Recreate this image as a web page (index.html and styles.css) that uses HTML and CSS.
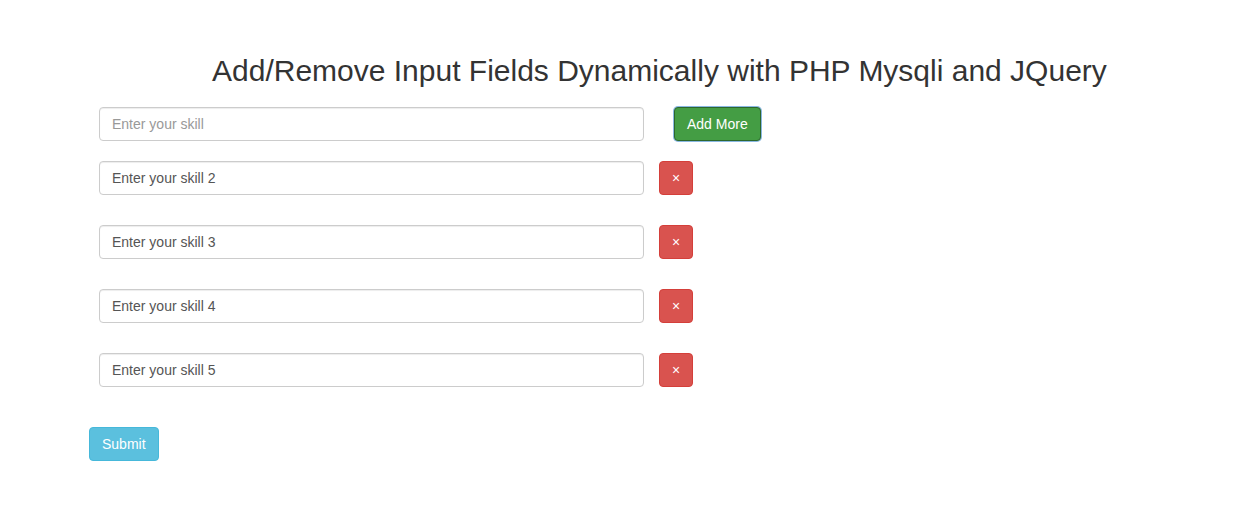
FILE: index.html
```html
<!DOCTYPE html>
<html lang="en">
<head>
    <meta charset="UTF-8">
    <title>Add/Remove Input Fields Dynamically</title>
    <link rel="stylesheet" href="styles.css">
</head>
<body>
<div class="container">
    <h2 class="title">Add/Remove Input Fields Dynamically with PHP Mysqli and JQuery</h2>
    <form class="skills-form" onsubmit="return false">
        <div id="dynamic_field" class="field-list">
            <div class="field-row">
                <input type="text" name="skill[]" placeholder="Enter your skill" class="form-control">
                <button type="button" class="btn btn-success btn-add">Add More</button>
            </div>
            <div class="field-row">
                <input type="text" name="skill[]" value="Enter your skill 2" class="form-control">
                <button type="button" class="btn btn-danger">&times;</button>
            </div>
            <div class="field-row">
                <input type="text" name="skill[]" value="Enter your skill 3" class="form-control">
                <button type="button" class="btn btn-danger">&times;</button>
            </div>
            <div class="field-row">
                <input type="text" name="skill[]" value="Enter your skill 4" class="form-control">
                <button type="button" class="btn btn-danger">&times;</button>
            </div>
            <div class="field-row">
                <input type="text" name="skill[]" value="Enter your skill 5" class="form-control">
                <button type="button" class="btn btn-danger">&times;</button>
            </div>
        </div>
        <button type="submit" class="btn btn-info">Submit</button>
    </form>
</div>
</body>
</html>
```

FILE: styles.css
```css
* {
    box-sizing: border-box;
}

body {
    margin: 0;
    font-family: "Liberation Sans", Arial, sans-serif;
    font-size: 14px;
    line-height: 1.42857;
    color: #333;
    background: #fff;
}

.container {
    padding: 0 0 0 89px;
}

.title {
    margin: 0;
    padding: 51px 0 0 123px;
    font-size: 30px;
    font-weight: normal;
    line-height: 40px;
    color: #333;
}

.skills-form {
    margin-top: 16px;
}

.field-list {
    display: flex;
    flex-direction: column;
    gap: 30px;
    padding-left: 10px;
}

.field-list .field-row:first-child {
    margin-bottom: -10px;
}

.field-row {
    display: flex;
    align-items: center;
    gap: 15px;
}

.form-control {
    width: 545px;
    height: 34px;
    padding: 6px 12px;
    font-family: inherit;
    font-size: 14px;
    color: #555;
    background: #fff;
    border: 1px solid #ccc;
    border-radius: 4px;
    box-shadow: inset 0 1px 1px rgba(0, 0, 0, 0.075);
}

.form-control::placeholder {
    color: #999;
}

.btn {
    height: 34px;
    padding: 6px 12px;
    font-family: inherit;
    font-size: 14px;
    line-height: 20px;
    color: #fff;
    border: 1px solid transparent;
    border-radius: 4px;
    cursor: pointer;
}

.btn-success {
    background-color: #449d44;
    border-color: #2d672d;
    box-shadow: 0 0 0 1px #8ab8e2;
}

.btn-add {
    margin-left: 15px;
}

.btn-danger {
    width: 34px;
    padding: 6px 0;
    background-color: #d9534f;
    border-color: #d43f3a;
}

.btn-info {
    margin-top: 40px;
    background-color: #5bc0de;
    border-color: #46b8da;
}
```
